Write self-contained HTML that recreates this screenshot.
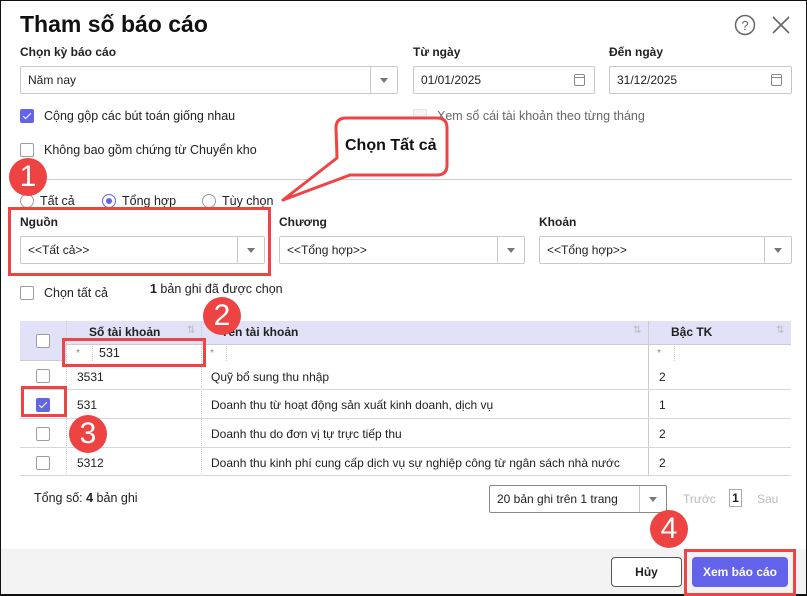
<!DOCTYPE html>
<html><head><meta charset="utf-8"><style>
*{box-sizing:border-box;margin:0;padding:0}
body{width:807px;height:596px;overflow:hidden;background:#fff;font-family:"Liberation Sans",sans-serif;color:#212121;font-size:12px;position:relative}
.frame{position:absolute;left:0;top:0;width:807px;height:596px;border:1px solid #111;border-bottom-width:2px}
.a{position:absolute}
.lbl{font-weight:bold;font-size:12px}
.inp{position:absolute;border:1px solid #c9c9c9;border-radius:2px;height:28px;background:#fff;font-size:12px;line-height:26px;padding-left:7px}
.dd{position:absolute;right:0;top:0;width:27px;height:26px;border-left:1px solid #c9c9c9}
.dd:after{content:"";position:absolute;left:9px;top:11px;border:4px solid transparent;border-top:5px solid #777}
.cb{position:absolute;width:14px;height:14px;border:1px solid #9e9e9e;border-radius:2px;background:#fff}
.cb.on{background:#6464e6;border-color:#6464e6}
.cb.on:after{content:"";position:absolute;left:4px;top:1px;width:3px;height:7px;border:solid #fff;border-width:0 1.5px 1.5px 0;transform:rotate(45deg)}
.rd{position:absolute;width:14px;height:14px;border:1px solid #9e9e9e;border-radius:50%}
.rd.on{border-color:#6464e6}
.rd.on:after{content:"";position:absolute;left:3px;top:3px;width:6px;height:6px;border-radius:50%;background:#6464e6}
.red{position:absolute;border:3px solid #ef4444}
.badge{position:absolute;width:38px;height:38px;border-radius:50%;background:#ee4343;color:#fff;font-size:30px;text-align:center;line-height:38px}
.cal{position:absolute;right:9px;top:7px;width:11px;height:12px;border:1px solid #888;border-radius:2px}
.cal:before{content:"";position:absolute;left:0;right:0;top:2px;border-top:1px solid #888}
.row{position:absolute;left:20px;width:771px;border-bottom:1px solid #d6d6de}
.vl{position:absolute;border-left:1px dotted #ccc}
</style></head><body>
<div class="frame"></div>
<div class="a" style="left:20px;top:11px;font-size:23px;font-weight:bold;color:#111">Tham số báo cáo</div>
<svg class="a" style="left:734px;top:14px" width="22" height="22"><circle cx="11" cy="11" r="9.5" fill="none" stroke="#666" stroke-width="1.5"/><text x="11" y="16" text-anchor="middle" font-size="13" fill="#666" font-family="Liberation Sans">?</text></svg>
<svg class="a" style="left:771px;top:15px" width="20" height="20"><path d="M2 2L18 18M18 2L2 18" stroke="#666" stroke-width="1.6"/></svg>

<div class="a lbl" style="left:20px;top:45px">Chọn kỳ báo cáo</div>
<div class="inp" style="left:20px;top:66px;width:378px">Năm nay<div class="dd"></div></div>
<div class="a lbl" style="left:413px;top:45px">Từ ngày</div>
<div class="inp" style="left:413px;top:66px;width:182px">01/01/2025<div class="cal"></div></div>
<div class="a lbl" style="left:609px;top:45px">Đến ngày</div>
<div class="inp" style="left:609px;top:66px;width:183px">31/12/2025<div class="cal"></div></div>

<div class="cb on" style="left:20px;top:109px"></div>
<div class="a" style="left:44px;top:109px;font-size:12.5px">Cộng gộp các bút toán giống nhau</div>
<div class="cb" style="left:413px;top:109px;border-color:#e6e6e6;background:#f5f5f5"></div>
<div class="a" style="left:437px;top:109px;font-size:12.5px;color:#666">Xem sổ cái tài khoản theo từng tháng</div>
<div class="cb" style="left:20px;top:143px"></div>
<div class="a" style="left:44px;top:143px;font-size:12.5px">Không bao gồm chứng từ Chuyển kho</div>
<div class="a" style="left:20px;top:179px;width:772px;border-top:1px solid #ccc"></div>

<div class="rd" style="left:20px;top:194px"></div><div class="a" style="left:40px;top:194px;font-size:12.5px">Tất cả</div>
<div class="rd on" style="left:102px;top:194px"></div><div class="a" style="left:122px;top:194px;font-size:12.5px">Tổng hợp</div>
<div class="rd" style="left:202px;top:194px"></div><div class="a" style="left:222px;top:194px;font-size:12.5px">Tùy chọn</div>

<div class="a lbl" style="left:20px;top:215px">Nguồn</div>
<div class="inp" style="left:20px;top:236px;width:245px">&lt;&lt;Tất cả&gt;&gt;<div class="dd"></div></div>
<div class="a lbl" style="left:279px;top:215px">Chương</div>
<div class="inp" style="left:279px;top:236px;width:246px">&lt;&lt;Tổng hợp&gt;&gt;<div class="dd"></div></div>
<div class="a lbl" style="left:539px;top:215px">Khoản</div>
<div class="inp" style="left:539px;top:236px;width:253px">&lt;&lt;Tổng hợp&gt;&gt;<div class="dd"></div></div>

<div class="cb" style="left:20px;top:286px"></div>
<div class="a" style="left:44px;top:286px;font-size:12.5px">Chọn tất cả</div>
<div class="a" style="left:150px;top:282px;font-size:12.5px"><b>1</b> bản ghi đã được chọn</div>

<div class="a" style="left:20px;top:321px;width:771px;height:40px;background:#e1e1f8;border-bottom:1px solid #ccc"></div>
<div class="a" style="left:66px;top:344px;width:725px;height:17px;background:#fff;border-top:1px solid #ccc"></div>
<div class="cb" style="left:36px;top:334px"></div>
<div class="a lbl" style="left:89px;top:325px">Số tài khoản</div>
<div class="a lbl" style="left:221px;top:325px">Tên tài khoản</div>
<div class="a lbl" style="left:671px;top:325px">Bậc TK</div>
<div class="a" style="left:187px;top:325px;color:#bbb;font-size:10px">⇅</div>
<div class="a" style="left:633px;top:325px;color:#bbb;font-size:10px">⇅</div>
<div class="a" style="left:776px;top:325px;color:#bbb;font-size:10px">⇅</div>
<div class="a" style="left:76px;top:348px;color:#888;font-size:10px">*</div>
<div class="a" style="left:210px;top:348px;color:#888;font-size:10px">*</div>
<div class="a" style="left:657px;top:348px;color:#888;font-size:10px">*</div>
<div class="vl" style="left:92px;top:344px;height:17px"></div>
<div class="vl" style="left:226px;top:344px;height:17px"></div>
<div class="vl" style="left:674px;top:344px;height:17px"></div>
<div class="a" style="left:99px;top:346px;font-size:12.5px">531</div>
<div class="vl" style="left:66px;top:321px;height:155px"></div>
<div class="vl" style="left:201px;top:321px;height:155px"></div>
<div class="vl" style="left:648px;top:321px;height:155px;border-left:1px solid #ccc"></div>

<div class="row" style="top:361px;height:29px"></div>
<div class="row" style="top:390px;height:29px"></div>
<div class="row" style="top:419px;height:29px"></div>
<div class="row" style="top:448px;height:28px"></div>
<div class="cb" style="left:36px;top:369px"></div><div class="a" style="left:77px;top:370px">3531</div><div class="a" style="left:211px;top:370px">Quỹ bổ sung thu nhập</div><div class="a" style="left:659px;top:370px">2</div>
<div class="cb on" style="left:36px;top:398px"></div><div class="a" style="left:77px;top:398px">531</div><div class="a" style="left:211px;top:398px">Doanh thu từ hoạt động sản xuất kinh doanh, dịch vụ</div><div class="a" style="left:659px;top:398px">1</div>
<div class="cb" style="left:36px;top:427px"></div><div class="a" style="left:211px;top:427px">Doanh thu do đơn vị tự trực tiếp thu</div><div class="a" style="left:659px;top:427px">2</div>
<div class="cb" style="left:36px;top:456px"></div><div class="a" style="left:77px;top:456px">5312</div><div class="a" style="left:211px;top:456px">Doanh thu kinh phí cung cấp dịch vụ sự nghiệp công từ ngân sách nhà nước</div><div class="a" style="left:659px;top:456px">2</div>

<div class="a" style="left:34px;top:491px;font-size:12.5px">Tổng số: <b>4</b> bản ghi</div>
<div class="inp" style="left:489px;top:485px;width:178px;border-color:#888">20 bản ghi trên 1 trang<div class="dd"></div></div>
<div class="a" style="left:683px;top:492px;color:#bbb">Trước</div>
<div class="a" style="left:729px;top:489px;width:13px;height:18px;border:1px solid #aaa;font-weight:bold;text-align:center;line-height:16px">1</div>
<div class="a" style="left:757px;top:492px;color:#bbb">Sau</div>

<div class="a" style="left:1px;top:549px;width:805px;height:45px;background:#f3f3f3"></div>
<div class="a" style="left:611px;top:557px;width:71px;height:30px;border:1px solid #555;border-radius:4px;background:#fff;text-align:center;line-height:28px;font-weight:bold">Hủy</div>
<div class="a" style="left:692px;top:557px;width:96px;height:30px;border-radius:4px;background:#6262ea;color:#fff;text-align:center;line-height:30px;font-weight:bold">Xem báo cáo</div>

<div class="red" style="left:8px;top:207px;width:263px;height:69px"></div>
<div class="red" style="left:62px;top:338px;width:144px;height:29px"></div>
<div class="red" style="left:21px;top:386px;width:46px;height:31px"></div>
<div class="red" style="left:684px;top:549px;width:112px;height:47px"></div>
<svg class="a" style="left:0;top:0" width="807" height="596"><path d="M350 175 L437 175 Q447 175 447 165 L447 128 Q447 118 437 118 L346 118 Q336 118 336 128 L337 158 L283 200 L350 175 Z" fill="#fff" stroke="#ef4444" stroke-width="3" stroke-linejoin="round"/></svg>
<div class="a" style="left:345px;top:137px;font-size:16px;font-weight:bold;color:#111">Chọn Tất cả</div>
<div class="badge" style="left:9px;top:158px">1</div>
<div class="badge" style="left:203px;top:297px">2</div>
<div class="badge" style="left:69px;top:415px">3</div>
<div class="badge" style="left:650px;top:510px">4</div>
</body></html>
